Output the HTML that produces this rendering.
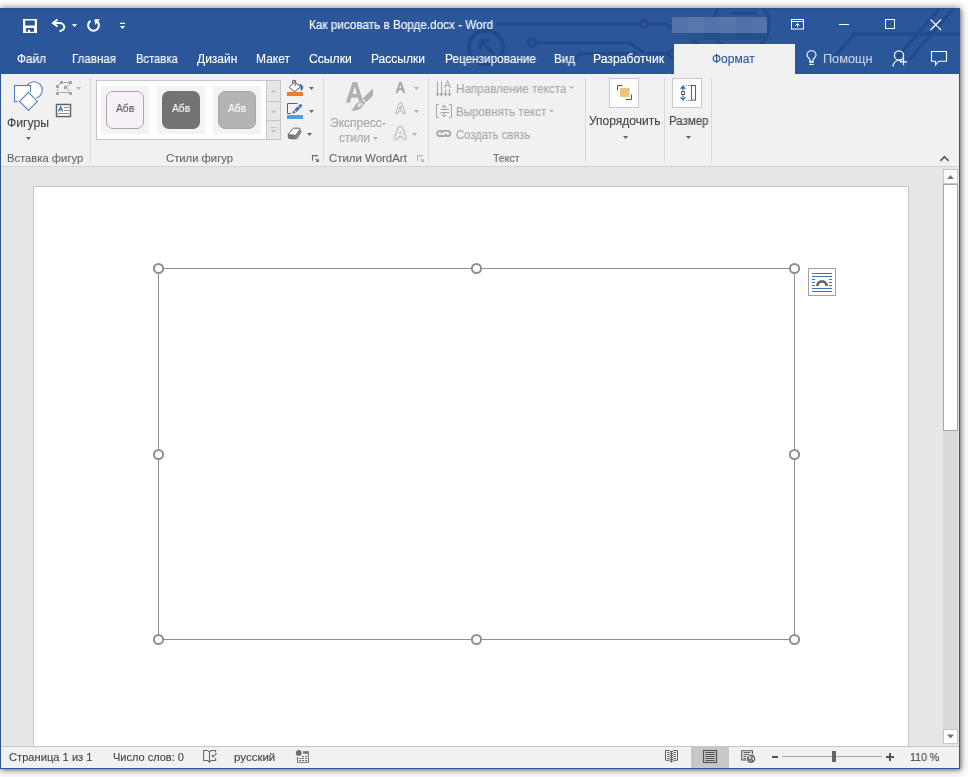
<!DOCTYPE html>
<html><head><meta charset="utf-8">
<style>
*{margin:0;padding:0;box-sizing:border-box}
html,body{width:968px;height:777px;overflow:hidden;background:#fff;font-family:"Liberation Sans",sans-serif}
.a{position:absolute}
.t{position:absolute;white-space:nowrap;line-height:1;transform-origin:0 0;-webkit-text-stroke:0.12px currentColor;will-change:transform}
svg{position:absolute;left:0;top:0}
</style></head>
<body>
<!-- window shadow -->
<div class="a" style="left:0;top:8px;width:960px;height:761px;box-shadow:1px 1px 3px rgba(40,30,20,.35),1px 2px 8px 1px rgba(0,0,0,.22),0 -1px 7px rgba(0,0,0,.26)"></div>
<!-- title + tabs -->
<div class="a" style="left:0;top:8px;width:960px;height:66px;background:#2b579a"></div>
<div class="a" style="left:0;top:8px;width:960px;height:1px;background:#24508f"></div>

<!-- circuit pattern -->
<svg width="960" height="66" viewBox="0 8 960 66" style="top:8px">
 <g fill="none" stroke="#22498a" stroke-width="3">
  <path d="M496 24 H640 M647.5 24 H666 L700 45"/>
  <circle cx="644" cy="24" r="3.5"/>
  <circle cx="532.2" cy="42.7" r="3.5"/>
  <path d="M535.7 42.7 H629 L645 53.5 H669"/><circle cx="673" cy="53.5" r="4"/>
  <path d="M574 62 Q576 53.5 586 53.5 H636"/>
  <circle cx="486" cy="47.3" r="17" stroke-width="4"/>
  <path d="M482.5 42.5 L495 55 M480.5 40.5 H489.5 M480.5 40.5 V49.5" stroke-width="3.6"/>
  <path d="M834 57 L854.4 34 H960"/>
  <path d="M895 60 L940 8 M909 60 L954 8"/>
  <path d="M722 4.5 A28 28 0 0 0 722 45.5 M760 4.5 A28 28 0 0 1 760 45.5"/>
  <path d="M729 13 H757"/>
 </g>
</svg>
<!-- blurred name -->
<div class="a" style="left:672px;top:33px;width:95px;height:7px;background:linear-gradient(90deg,#2a5492 0 16px,#28538f 16px 32px,#26508c 32px 48px,#27528e 48px 64px,#26508c 64px 80px,#25508c 80px)"></div>
<div class="a" style="left:672px;top:17px;width:95px;height:16px;background:linear-gradient(90deg,#5373a8 0 16px,#5878ae 16px 32px,#5272a6 32px 48px,#5575ab 48px 64px,#5070a3 64px 80px,#5373a7 80px)"></div>

<!-- Формат tab -->
<div class="a" style="left:674px;top:44px;width:121px;height:31px;background:#f1f1f1"></div>

<!-- ribbon -->
<div class="a" style="left:1px;top:74px;width:958px;height:93px;background:#f1f1f1;border-bottom:1px solid #d4d4d4"></div>
<!-- separators -->
<div class="a" style="left:90px;top:78px;width:1px;height:84px;background:#dadada"></div>
<div class="a" style="left:323px;top:78px;width:1px;height:84px;background:#dadada"></div>
<div class="a" style="left:428px;top:78px;width:1px;height:84px;background:#dadada"></div>
<div class="a" style="left:585px;top:78px;width:1px;height:84px;background:#dadada"></div>
<div class="a" style="left:664px;top:78px;width:1px;height:84px;background:#dadada"></div>
<div class="a" style="left:711px;top:78px;width:1px;height:84px;background:#dadada"></div>

<!-- gallery -->
<div class="a" style="left:96px;top:80px;width:185px;height:60px;background:#fff;border:1px solid #c6c6c6"></div>
<div class="a" style="left:266px;top:80px;width:15px;height:60px;background:#e6e6e6;border:1px solid #c6c6c6"></div>
<div class="a" style="left:266px;top:101px;width:15px;height:1px;background:#c6c6c6"></div>
<div class="a" style="left:266px;top:120px;width:15px;height:1px;background:#c6c6c6"></div>
<div class="a" style="left:101px;top:86px;width:48px;height:48px;background:#f6f1f7"></div>
<div class="a" style="left:157px;top:86px;width:48px;height:48px;background:#f6f1f7"></div>
<div class="a" style="left:213px;top:86px;width:48px;height:48px;background:#f6f1f7"></div>
<div class="a" style="left:106px;top:91px;width:38px;height:38px;background:#f6f1f7;border:1px solid #a8a8a8;border-radius:7px"></div>
<div class="a" style="left:162px;top:91px;width:38px;height:38px;background:#737373;border-radius:7px"></div>
<div class="a" style="left:218px;top:91px;width:38px;height:38px;background:#b5b3b6;border:1px solid #a8a8a8;border-radius:7px"></div>

<!-- Arrange / Size boxes -->
<div class="a" style="left:609px;top:78px;width:30px;height:30px;background:#fcfcfc;border:1px solid #c9c9c9"></div>
<div class="a" style="left:672px;top:78px;width:30px;height:30px;background:#fcfcfc;border:1px solid #c9c9c9"></div>

<!-- document area -->
<div class="a" style="left:1px;top:167px;width:958px;height:579px;background:#e6e6e6"></div>
<div class="a" style="left:33px;top:186px;width:876px;height:560px;background:#fff;border:1px solid #c6c6c6;border-bottom:none"></div>

<!-- scrollbar -->
<div class="a" style="left:943px;top:169px;width:15px;height:575px;background:#dadada"></div>
<div class="a" style="left:943px;top:169px;width:15px;height:15px;background:#fff;border:1px solid #c6c6c6"></div>
<div class="a" style="left:943px;top:184px;width:15px;height:247px;background:#fff;border:1px solid #a6a6a6"></div>
<div class="a" style="left:943px;top:729px;width:15px;height:15px;background:#fff;border:1px solid #c6c6c6"></div>

<!-- status bar -->
<div class="a" style="left:1px;top:746px;width:958px;height:22px;background:#f1f1f1;border-top:1px solid #c6c6c6"></div>
<div class="a" style="left:691px;top:747px;width:38px;height:21px;background:#c8c8c8"></div>

<!-- window border -->
<div class="a" style="left:0;top:768px;width:960px;height:1px;background:#2b579a"></div>
<div class="a" style="left:0;top:74px;width:1px;height:695px;background:#2b579a"></div>
<div class="a" style="left:959px;top:74px;width:1px;height:695px;background:#2b579a"></div>

<div class="t" style="left:308.7px;top:18.84px;font-size:12px;color:#fff;transform:scaleX(0.977);">Как рисовать в Ворде.docx - Word</div>
<div class="t" style="left:17.0px;top:53.24px;font-size:12px;color:#fff;transform:scaleX(0.983);">Файл</div>
<div class="t" style="left:72.3px;top:53.04px;font-size:12px;color:#fff;transform:scaleX(0.963);">Главная</div>
<div class="t" style="left:136.0px;top:53.24px;font-size:12px;color:#fff;transform:scaleX(0.935);">Вставка</div>
<div class="t" style="left:196.8px;top:53.24px;font-size:12px;color:#fff;">Дизайн</div>
<div class="t" style="left:256.0px;top:53.24px;font-size:12px;color:#fff;">Макет</div>
<div class="t" style="left:309.0px;top:53.24px;font-size:12px;color:#fff;transform:scaleX(1.013);">Ссылки</div>
<div class="t" style="left:371.0px;top:53.24px;font-size:12px;color:#fff;">Рассылки</div>
<div class="t" style="left:444.5px;top:53.24px;font-size:12px;color:#fff;transform:scaleX(0.982);">Рецензирование</div>
<div class="t" style="left:553.6px;top:53.24px;font-size:12px;color:#fff;transform:scaleX(0.967);">Вид</div>
<div class="t" style="left:592.7px;top:53.24px;font-size:12px;color:#fff;transform:scaleX(1.015);">Разработчик</div>
<div class="t" style="left:712.3px;top:53.24px;font-size:12px;color:#2b579a;">Формат</div>
<div class="t" style="left:823.3px;top:53.24px;font-size:12px;color:#c3d0e6;transform:scaleX(1.057);">Помощн</div>
<div class="t" style="left:6.8px;top:116.64px;font-size:12px;color:#444;transform:scaleX(1.015);">Фигуры</div>
<div class="t" style="left:7.2px;top:152.59px;font-size:11px;color:#666;transform:scaleX(1.021);">Вставка фигур</div>
<div class="t" style="left:115.9px;top:102.59px;font-size:11px;color:#595959;transform:scaleX(0.929);">Абв</div>
<div class="t" style="left:171.6px;top:102.59px;font-size:11px;color:#fff;transform:scaleX(0.929);">Абв</div>
<div class="t" style="left:227.6px;top:102.59px;font-size:11px;color:#fff;transform:scaleX(0.929);">Абв</div>
<div class="t" style="left:165.6px;top:152.59px;font-size:11px;color:#666;transform:scaleX(1.024);">Стили фигур</div>
<div class="t" style="left:330.0px;top:116.64px;font-size:12px;color:#a6a6a6;">Экспресс-</div>
<div class="t" style="left:338.8px;top:132.44px;font-size:12px;color:#a6a6a6;transform:scaleX(0.965);">стили</div>
<div class="t" style="left:328.7px;top:152.59px;font-size:11px;color:#666;transform:scaleX(1.039);">Стили WordArt</div>
<div class="t" style="left:455.6px;top:82.54px;font-size:12px;color:#a6a6a6;transform:scaleX(0.971);">Направление текста</div>
<div class="t" style="left:455.6px;top:106.04px;font-size:12px;color:#a6a6a6;transform:scaleX(0.967);">Выровнять текст</div>
<div class="t" style="left:455.6px;top:128.64px;font-size:12px;color:#a6a6a6;transform:scaleX(0.934);">Создать связь</div>
<div class="t" style="left:493.3px;top:152.59px;font-size:11px;color:#666;transform:scaleX(0.953);">Текст</div>
<div class="t" style="left:589.0px;top:115.14px;font-size:12px;color:#444;">Упорядочить</div>
<div class="t" style="left:668.5px;top:115.14px;font-size:12px;color:#444;transform:scaleX(0.958);">Размер</div>
<div class="t" style="left:8.5px;top:751.99px;font-size:11px;color:#444;transform:scaleX(1.013);">Страница 1 из 1</div>
<div class="t" style="left:112.5px;top:751.99px;font-size:11px;color:#444;">Число слов: 0</div>
<div class="t" style="left:234.4px;top:751.99px;font-size:11px;color:#444;transform:scaleX(1.046);">русский</div>
<div class="t" style="left:909.7px;top:751.99px;font-size:11px;color:#444;transform:scaleX(0.965);">110 %</div>

<!-- icons -->
<svg width="968" height="777" viewBox="0 0 968 777">
 <!-- QAT: save -->
 <path fill="#fff" fill-rule="evenodd" d="M23 19H37V33H23Z M25.2 20.5H34.8V25.5H25.2Z M26 28H34V31.8H30V29.8H28V31.8H26Z"/>
 <!-- undo -->
 <g fill="none" stroke="#fff" stroke-width="2">
  <path d="M57.5 19.5 L53 23 L57.5 26.5"/>
  <path d="M53 23 H59.5 A4.8 4 0 0 1 59.5 31 H60.5"/>
 </g>
 <path fill="#fff" d="M72 24H77L74.5 27Z"/>
 <!-- redo -->
 <path fill="none" stroke="#fff" stroke-width="2" d="M90.5 20.8 A5.4 5.4 0 1 0 97 21.2"/>
 <path fill="#fff" d="M94.3 19.3H100L95.3 25Z"/>
 <!-- customize -->
 <path fill="#fff" d="M120 22.8H125V24H120Z M120 26H125L122.5 29Z"/>
 <!-- ribbon display options -->
 <g fill="none" stroke="#fff" stroke-width="1">
  <rect x="791.5" y="19.5" width="12" height="9.5"/>
  <path d="M791.5 21.5H803.5 M797.5 27V23.5 M795.5 25.5L797.5 23.5L799.5 25.5"/>
 </g>
 <!-- min max close -->
 <path stroke="#fff" stroke-width="1" d="M839 24.5H849"/>
 <rect x="885.5" y="19.5" width="9" height="9" fill="none" stroke="#fff" stroke-width="1"/>
 <path stroke="#fff" stroke-width="1.1" d="M930.5 19.5L941 30 M941 19.5L930.5 30"/>
 <!-- lightbulb -->
 <path fill="none" stroke="#fff" stroke-width="1.15" d="M809.9 61.5 V59.6 C809.9 58.4 807 57.4 807 55.2 A4.5 4.5 0 0 1 816 55.2 C816 57.4 813.1 58.4 813.1 59.6 V61.5"/>
 <rect x="809.3" y="60.9" width="4.4" height="1.8" fill="#fff"/>
 <path stroke="#fff" stroke-width="1.1" d="M809.3 64.4 H813.8"/>
 <!-- person add -->
 <g fill="none" stroke="#fff" stroke-width="1.2">
  <circle cx="899" cy="55.5" r="4.6"/>
  <path d="M893 66.5 C893.5 62.5 896 60.5 899 60.5 C900.5 60.5 901.5 61 902 61.3"/>
  <path d="M900 61.8H907 M903.5 58.3V65.3"/>
 </g>
 <!-- comment -->
 <path fill="none" stroke="#fff" stroke-width="1.1" d="M931.5 51.5H946.5V61.2H938.5L935.5 65V61.2H931.5Z"/>

 <!-- shapes icon -->
 <g stroke="#4a7ec0" stroke-width="1.1" fill="#fff">
  <circle cx="34" cy="90" r="8.3"/>
  <rect x="14.5" y="85.5" width="16" height="16"/>
  <path d="M28.5 92.3 L37.5 101.4 L28.5 110.5 L19.5 101.4Z" stroke="#fff" stroke-width="3"/>
  <path d="M28.5 92.3 L37.5 101.4 L28.5 110.5 L19.5 101.4Z"/>
 </g>
 <path fill="#666" d="M26 137H31L28.5 140Z"/>
 <!-- edit shape (disabled) -->
 <g fill="#a6a6a6">
  <rect x="60" y="81" width="3" height="3"/><rect x="69" y="81" width="3" height="3"/>
  <rect x="56" y="85" width="3" height="3"/><rect x="64" y="86" width="3" height="3"/>
  <rect x="56" y="92" width="3" height="3"/><rect x="69" y="92" width="3" height="3"/>
 </g>
 <path fill="none" stroke="#a6a6a6" stroke-width="1" d="M63.5 82.5H69 M58 85.5L60.5 83.5 M67 86.5L70 84 M67 89L69.5 91 M57.5 89V91 M59.5 92.5H69"/>
 <path fill="#b3b3b3" d="M76 87H81L78.5 90Z"/>
 <!-- textbox -->
 <rect x="56.5" y="104.5" width="14" height="12" fill="#fff" stroke="#666" stroke-width="1.5"/>
 <path fill="none" stroke="#3f73b6" stroke-width="1.2" d="M58.4 111.4 L60.6 106.7 L62.8 111.4 M59.3 109.8H61.9"/>
 <path fill="none" stroke="#8a8a8a" stroke-width="1" d="M64 107.5H69 M64 110.5H69 M58 113.5H69"/>

 <!-- gallery arrows -->
 <path fill="#c4c4c4" d="M270.5 92.5H276.5L273.5 89.5Z M270.5 110.5H276.5L273.5 113.5Z M270.5 127H276.5V128H270.5Z M270.5 130H276.5L273.5 133Z"/>
 <!-- fill bucket -->
 <path fill="#3f73b6" d="M299.2 83.8 C302.2 84.3 303.8 86.6 303 88.7 L300.6 91.6 L300.6 86.8Z"/>
 <path fill="#fff" stroke="#555" stroke-width="1" d="M289.2 87.2 L294.6 81.9 L300.6 86.8 L294.4 91.8Z"/>
 <path fill="none" stroke="#555" stroke-width="1" d="M292.6 83.6 V81 Q292.6 80.4 293.2 80.4 H295.1 Q295.7 80.4 295.7 81 V82.4 M295.2 82.2 V86"/>
 <rect x="287" y="92" width="16" height="4" fill="#ed7d31"/>
 <path fill="#666" d="M309 87H314L311.5 90Z"/>
 <!-- pen -->
 <path fill="none" stroke="#606060" stroke-width="1" d="M297.5 103.5H287.5V113.5H291"/>
 <path stroke="#3f73b6" stroke-width="3" stroke-linecap="round" d="M295.6 110.6 L300.6 105.6"/><path fill="#3f73b6" d="M292.2 113.8 L293.2 110.4 L295.6 112.8Z"/><path stroke="#f1f1f1" stroke-width="0.8" d="M297.9 105.9 L300.3 108.3 M293.9 109.9 L296.3 112.3"/>
 <rect x="287" y="115" width="16" height="4" fill="#5b9bd5"/>
 <path fill="#666" d="M309 110H314L311.5 113Z"/>
 <!-- eraser -->
 <path fill="#8a8a8a" d="M299.8 129 Q301.8 129.8 301.4 132.6 L297.6 138.6 Q296.8 139.6 296 138.8 L295.6 135.4Z"/>
 <path fill="#747474" d="M287.8 134.6 L295.6 135.4 L296.2 139.2 L289.6 139.2 Q287.8 138.8 287.8 136.8Z"/>
 <path fill="#fff" stroke="#606060" stroke-width="1" d="M288 134.6 L292.6 128.8 Q293.2 128.2 294.2 128.2 L299.2 128.2 Q300.6 128.4 299.9 129.6 L295.6 135.4 Z"/>
 <path fill="#666" d="M307 133H312L309.5 136Z"/>
 <!-- dialog launchers -->
 <path fill="none" stroke="#6a6a6a" stroke-width="1.1" d="M312.5 160.8 V155.6 H318 M315.6 158.6 L317.6 160.6"/><path fill="#6a6a6a" d="M318.9 161.9 H315.4 L318.9 158.4Z"/>
 <path fill="none" stroke="#b4b4b4" stroke-width="1.1" d="M417.5 160.8 V155.6 H423 M420.6 158.6 L422.6 160.6"/><path fill="#b4b4b4" d="M423.9 161.9 H420.4 L423.9 158.4Z"/>

 <!-- wordart big A + brush -->
 <path fill="#b0b0b0" d="M346 102.5 L352.5 82 H357 L363.5 102.5 H359.5 L358 97.5 H351.5 L350 102.5Z M352.6 94 H357 L354.8 86.5Z"/>
 <path fill="#b0b0b0" d="M373 88.5 V95.5 L366.3 102.2 L362.6 98.5Z"/>
 <path fill="#b0b0b0" d="M361.8 99.3 L365.5 103 L363.6 104.9 L359.9 101.2Z"/>
 <path fill="#b0b0b0" d="M359.2 101.9 L362.9 105.6 C362.3 109.2 357 111 351 110.6 C354 108.6 355.4 102.6 359.2 101.9Z"/>
 <circle cx="359.3" cy="105.2" r="1.9" fill="#efe4ef"/>
 <path fill="#b3b3b3" d="M373 137H378L375.5 140Z"/>
 <!-- small A's -->
 <defs><filter id="gl" x="-50%" y="-50%" width="200%" height="200%"><feGaussianBlur stdDeviation="0.9"/></filter></defs>
 <path fill="#a8a8a8" fill-rule="evenodd" d="M395.50 93.00 L399.30 81.80 L401.50 81.80 L405.20 93.00 L403.00 93.00 L402.10 90.20 L398.60 90.20 L397.70 93.00Z M399.20 88.30 L401.50 88.30 L400.35 84.80Z"/>
 <path fill="#fff" fill-rule="evenodd" stroke="#a8a8a8" stroke-width="0.9" d="M395.60 113.40 L399.40 103.00 L401.60 103.00 L405.30 113.40 L403.10 113.40 L402.20 110.80 L398.70 110.80 L397.80 113.40Z M399.30 109.04 L401.60 109.04 L400.45 105.79Z"/>
 <path fill="none" stroke="#b0b0b0" stroke-width="2" filter="url(#gl)" d="M395.20 138.60 L399.20 127.60 L401.51 127.60 L405.40 138.60 L403.09 138.60 L402.14 135.85 L398.46 135.85 L397.51 138.60Z M399.09 133.98 L401.51 133.98 L400.30 130.55Z"/>
 <path fill="#fff" fill-rule="evenodd" stroke="#c8c8c8" stroke-width="0.6" d="M395.20 138.60 L399.20 127.60 L401.51 127.60 L405.40 138.60 L403.09 138.60 L402.14 135.85 L398.46 135.85 L397.51 138.60Z M399.09 133.98 L401.51 133.98 L400.30 130.55Z"/>
 <path fill="#b3b3b3" d="M414 87H419L416.5 90Z M414 110H419L416.5 113Z M412 133H417L414.5 136Z"/>

 <!-- text direction -->
 <g fill="none" stroke="#a6a6a6" stroke-width="1">
  <path d="M437.5 81.5V95 M441.5 81.5V95 M445.5 89V95 M449.5 89V95"/>
  <path d="M444.5 88 L447.5 80.5 L450.5 88 M445.7 85.5H449.3"/>
 </g>
 <path fill="#a6a6a6" d="M435.5 93.5H439.5L437.5 96.5Z M439.5 93.5H443.5L441.5 96.5Z M443.5 93.5H447.5L445.5 96.5Z M447.5 93.5H451.5L449.5 96.5Z"/>
 <path fill="#b3b3b3" d="M569 86.5H574L571.5 89Z"/>
 <!-- align text -->
 <rect x="437" y="104" width="14" height="13.5" fill="#f6f0f6"/>
 <path fill="none" stroke="#a6a6a6" stroke-width="1" d="M439 104.5H436.5V117.5H439 M449 104.5H451.5V117.5H449 M444 105.5V109 M444 113V116.5 M441.5 107.5L444 105L446.5 107.5 M441.5 114.5L444 117L446.5 114.5 M440.5 109.5H449 M440.5 112.5H449"/>
 <path fill="#b3b3b3" d="M549 110H554L551.5 112.5Z"/>
 <!-- link -->
 <g fill="none" stroke="#a6a6a6" stroke-width="1.8">
  <path d="M442 130.8 H439.8 A2.6 2.6 0 0 0 439.8 136 H443.5 A2.6 2.6 0 0 0 446 133.4"/>
  <path d="M445.5 136 H447.7 A2.6 2.6 0 0 0 447.7 130.8 H444 A2.6 2.6 0 0 0 441.5 133.4"/>
 </g>
 <!-- arrange icon -->
 <rect x="620" y="88" width="9.5" height="9" fill="#eec47c"/>
 <path fill="none" stroke="#555" stroke-width="1" d="M617.5 90.5V85.5H622.5 M626 99.5H631.5V94.5"/>
 <path fill="#666" d="M623 136H628.2L625.6 139Z"/>
 <!-- size icon -->
 <path fill="#3f73b6" d="M679.8 88.8 L683 85 L686.2 88.8Z M682.2 88H683.8V90.5H682.2Z M679.8 97.2 L683 101 L686.2 97.2Z M682.2 95.5H683.8V98H682.2Z"/>
 <rect x="681.5" y="91.5" width="3" height="3" fill="none" stroke="#666" stroke-width="1"/>
 <path fill="none" stroke="#777" stroke-width="1" stroke-dasharray="1 1" d="M686 85.5H691 M686 100.5H691"/>
 <rect x="691.5" y="85.5" width="4" height="14.6" fill="none" stroke="#606060" stroke-width="1"/>
 <path fill="#666" d="M685.9 136H691.1L688.5 139Z"/>
 <!-- collapse caret -->
 <path fill="none" stroke="#606060" stroke-width="1.8" d="M940.4 160.8L944.5 156.7L948.6 160.8"/>

 <!-- scrollbar arrows -->
 <path fill="#777" d="M947 179H954L950.5 175Z M947 734.5H954L950.5 738.5Z"/>

 <!-- shape -->
 <rect x="158.5" y="268.5" width="636" height="371" fill="none" stroke="#8f8f8f" stroke-width="1"/>
 <g fill="#fff" stroke="#8f8f8f" stroke-width="2">
  <circle cx="158.5" cy="268.5" r="4.6"/><circle cx="476.5" cy="268.5" r="4.6"/><circle cx="794.5" cy="268.5" r="4.6"/>
  <circle cx="158.5" cy="454.5" r="4.6"/><circle cx="794.5" cy="454.5" r="4.6"/>
  <circle cx="158.5" cy="639.5" r="4.6"/><circle cx="476.5" cy="639.5" r="4.6"/><circle cx="794.5" cy="639.5" r="4.6"/>
 </g>
 <!-- layout options -->
 <rect x="808.5" y="268.5" width="27" height="27" fill="#fff" stroke="#a0a0a0" stroke-width="1"/>
 <path fill="none" stroke="#3f73b6" stroke-width="1" d="M812 273.5H832 M812 276.5H832 M812 279.5H815 M829 279.5H832 M812 282.5H815 M829 282.5H832 M812 285.5H815 M829 285.5H832 M812 288.5H832 M812 291.5H832"/>
 <path fill="none" stroke="#666" stroke-width="2.8" d="M817.4 286 A4.6 4.6 0 0 1 826.6 286"/>

 <!-- status icons -->
 <g fill="none" stroke="#666" stroke-width="1.05">
  <path d="M207.8 750.5 H203.6 V760.4 H207.8 L209.5 762.3 L211.2 760.4 H215.6 V758 M215.6 752.6 V750.5 H211.2 L209.5 752.2 L207.8 750.5 M209.5 752.2 V762.5"/>
  <path d="M211.9 755.2 L213.1 756.9 L216.6 753.3" stroke-width="1.2"/>
 </g>
 <path fill="#fff" d="M298 756H308V762H298Z"/>
 <path fill="none" stroke="#666" stroke-width="1" d="M297.5 757 V762.3 H308.4 V753.5"/>
 <circle cx="298.8" cy="752.9" r="2.9" fill="#6e6e6e"/>
 <rect x="303.1" y="751.2" width="5.7" height="2.5" fill="#707070"/>
 <path fill="none" stroke="#6a6a6a" stroke-width="1" d="M302 756.5H304 M305 756.5H307 M299 758.5H301 M302 758.5H304 M305 758.5H307 M299 760.5H301 M302 760.5H304 M305 760.5H307"/>
 <!-- view icons -->
 <g fill="none" stroke="#555" stroke-width="1">
  <path d="M669.8 750.5 H665.5 V760.3 H669.8 M673.2 750.5 H677.5 V760.3 H673.2 M671.5 751 V762 M670 751.5H673 M670 753.5H673 M670 755.5H673 M670 757.5H673 M670 759.5H673 M670 760.6 L671.5 762.4 L673 760.6" stroke="#606060"/>
  <path d="M667.2 752.5H669.6 M667.2 754.5H669.6 M667.2 756.5H669.6 M667.2 758.5H669.6 M673.4 752.5H675.9 M673.4 754.5H675.9 M673.4 756.5H675.9 M673.4 758.5H675.9" stroke="#606060"/>
  <rect x="703.5" y="750.5" width="13" height="12" stroke-width="1.2"/>
  <path d="M705.3 752.5H714.7 M705.3 754.5H714.7 M705.3 756.5H714.7 M705.3 758.5H714.7 M705.3 760.5H714.7"/>
  <path d="M747 760H741.7V750.8H752.4V754" stroke-width="1.1"/>
  <path d="M743.5 752.6H750.5 M743.5 754.6H749 M743.5 756.6H746.5 M743.5 758.6H746"/>
 </g>
 <circle cx="751.1" cy="758.8" r="4.9" fill="#f1f1f1"/>
 <circle cx="751.1" cy="758.8" r="3.6" fill="#7a7a7a" stroke="#666" stroke-width="1.2"/>
 <path fill="#d6d6d6" d="M748.4 756.6 L750.6 755.8 L751.4 758.2 L749.6 759Z M752.2 757.4 L754.2 757.8 L753.8 760.2 L752.4 759.6Z M750 760.4 L751.6 760.8 L751 762.2Z"/>
 <!-- zoom -->
 <path stroke="#555" stroke-width="2" d="M772 757H778"/>
 <path stroke="#a6a6a6" stroke-width="1" d="M782 756.5H882"/>
 <rect x="832" y="751" width="4" height="11" fill="#666"/>
 <path stroke="#555" stroke-width="2" d="M886 757H894 M890 753V761"/>
</svg>
</body></html>
